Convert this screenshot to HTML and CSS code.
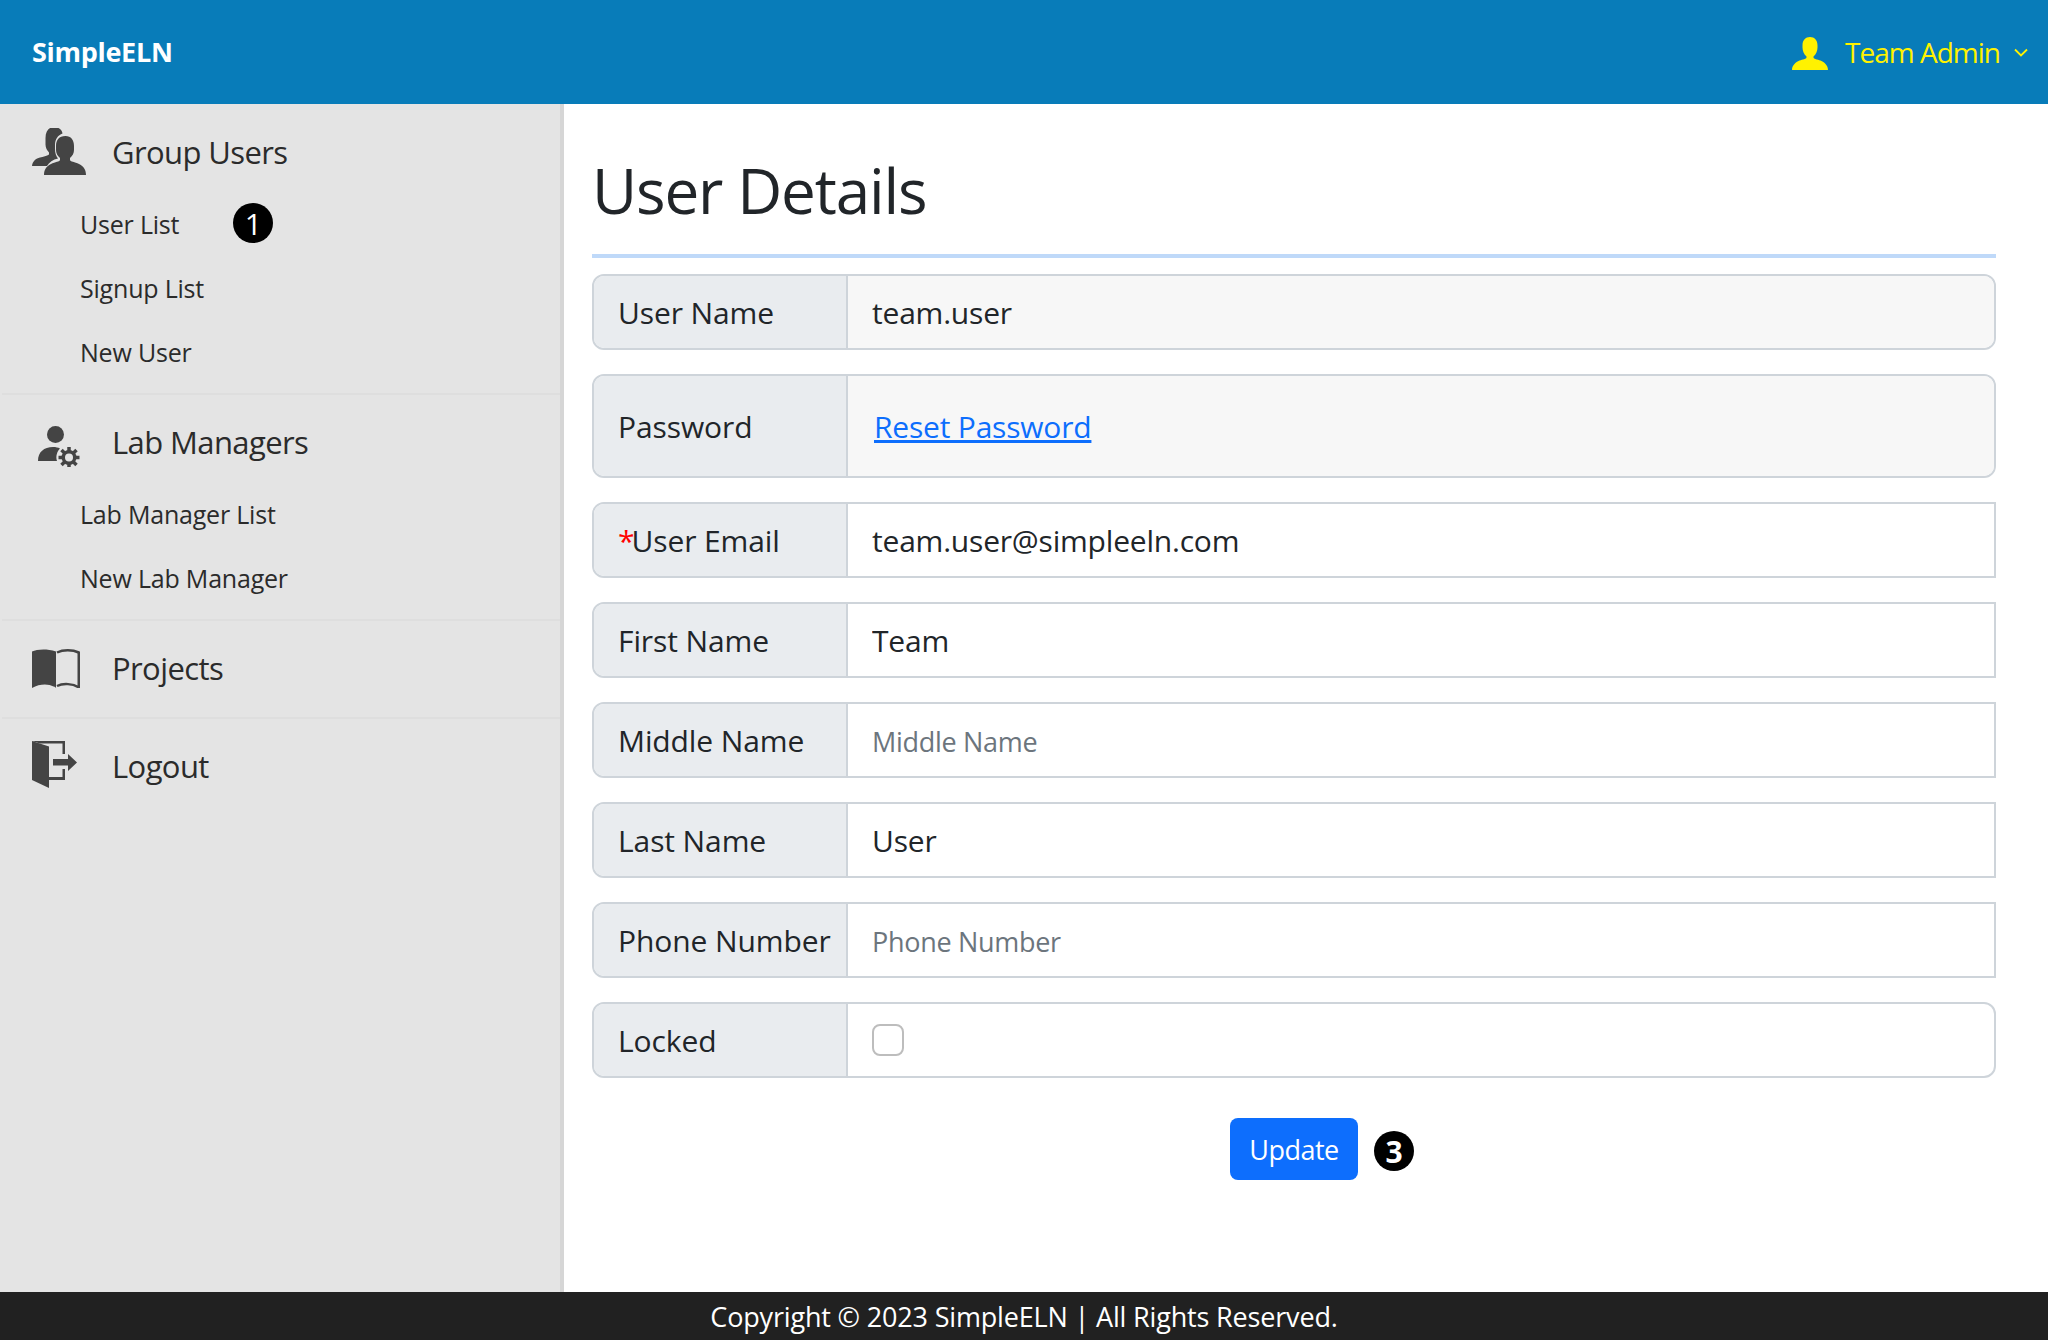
FILE: index.html
```html
<!DOCTYPE html>
<html lang="en">
<head>
    <meta charset="UTF-8">
    <title>SimpleELN - User Details</title>
    <link rel="stylesheet" href="styles.css">
</head>
<body>
    <header class="topbar">
        <a class="brand" href="#">SimpleELN</a>
        <a class="user-menu" href="#">
            <svg class="user-icon" viewBox="0 0 36 33"><path d="M18 0c4.500 0 7.500 3 7.500 8.500v2c0 3.500-1.500 7-4 9v1c0 1.500 4 2 7 3 4 1.500 7.500 5 7.500 9.500H0c0-4.500 3.500-8 7.500-9.500 3-1 7-1.500 7-3v-1c-2.500-2-4-5.500-4-9v-2C10.500 3 13.500 0 18 0z"/></svg>
            <span>Team Admin</span>
            <svg class="caret" viewBox="0 0 14 9"><path d="M1 1.500l6 6 6-6" fill="none" stroke="currentColor" stroke-width="1.800"/></svg>
        </a>
    </header>

    <div class="layout">
        <nav class="sidebar">
            <div class="nav-group">
                <a class="nav-head" href="#">
                    <span class="nav-icon">
                        <svg width="54" height="48" viewBox="0 1 54 48"><path d="M22 0c5 0 8 3 8.500 6.500C26 8 23 12.500 23 18v4c0 4 1 7 3 9.500-5 1-9 4-11 7.500H0c.5-5 4-7.500 8-8.500 3-.8 7-1.500 9-3v-2c-2-2-3.500-5-3.500-8V11C13.500 4 17 0 22 0z"/><path d="M33.500 9c5.500 0 8.500 4 8.500 10v4c0 3-1.500 6-4 8v2c0 1.500 5 2 9 4 4 2 7 5 7 11H12c0-6 3-9 7-11 4-2 9-2.500 9-4v-2c-2.500-2-4-5-4-8v-4c0-6 3-10 9.500-10z"/></svg>
                    </span>
                    Group Users
                </a>
                <a class="nav-item" href="#">User List<span class="step step-side">1</span></a>
                <a class="nav-item" href="#">Signup List</a>
                <a class="nav-item" href="#">New User</a>
            </div>
            <div class="nav-group">
                <a class="nav-head" href="#">
                    <span class="nav-icon">
                        <svg width="48" height="50" viewBox="-6 -9 48 50"><circle cx="17.500" cy="8.500" r="8.500"/><path d="M0 35c0-9 6-14 15-14 3 0 5 .5 7 1.500-3 3-4.500 8-3 12.500z"/><path d="M31 21v21M20.500 31.500h21M23.500 24l15 15M38.500 24l-15 15" stroke="#444" stroke-width="3.500"/><circle cx="31" cy="31.500" r="7.500"/><circle cx="31" cy="31.500" r="4" fill="#e4e4e4"/></svg>
                    </span>
                    Lab Managers
                </a>
                <a class="nav-item" href="#">Lab Manager List</a>
                <a class="nav-item" href="#">New Lab Manager</a>
            </div>
            <div class="nav-group">
                <a class="nav-head" href="#">
                    <span class="nav-icon">
                        <svg width="48" height="40" viewBox="0 -1 48 40"><path d="M0 2.500C5 .5 14-.5 24 2.500V39c-1-1-1.500-1.500-2.500-1.500-5-3-14-3-21.500 1.500z"/><path d="M25 3.500c6-3 15.500-3 21.750 0V38.500C41 34.500 31 34 25 37" fill="none" stroke="#444" stroke-width="2.500"/></svg>
                    </span>
                    Projects
                </a>
            </div>
            <div class="nav-group">
                <a class="nav-head" href="#">
                    <span class="nav-icon">
                        <svg width="46" height="50" viewBox="0 0 46 50"><path d="M0 0l17 5.500V47L0 39z"/><path d="M0 0h33v13h-2.500V2.500H8z"/><path d="M17 36h13.500v-8H33v11H17z"/><path d="M21 18h15v-5l9 8.500-9 8.500v-5.500H21z"/></svg>
                    </span>
                    Logout
                </a>
            </div>
        </nav>

        <main class="content">
            <h1 class="page-title">User Details</h1>
            <form class="user-form" onsubmit="return false">
                <div class="field">
                    <label class="field-label">User Name</label>
                    <input class="field-input" type="text" value="team.user" readonly>
                </div>
                <div class="field field-tall">
                    <label class="field-label">Password</label>
                    <div class="field-static"><a href="#">Reset Password</a></div>
                </div>
                <div class="field field-square">
                    <label class="field-label"><span class="required">*</span>User Email</label>
                    <input class="field-input" type="text" value="team.user@simpleeln.com">
                </div>
                <div class="field field-square">
                    <label class="field-label">First Name</label>
                    <input class="field-input" type="text" value="Team">
                </div>
                <div class="field field-square">
                    <label class="field-label">Middle Name</label>
                    <input class="field-input" type="text" placeholder="Middle Name">
                </div>
                <div class="field field-square">
                    <label class="field-label">Last Name</label>
                    <input class="field-input" type="text" value="User">
                </div>
                <div class="field field-square">
                    <label class="field-label">Phone Number</label>
                    <input class="field-input" type="text" placeholder="Phone Number">
                </div>
                <div class="field">
                    <label class="field-label">Locked</label>
                    <div class="field-check"><span class="checkbox"></span></div>
                </div>
                <div class="form-actions">
                    <div class="btn-wrap">
                        <button class="btn-update" type="submit">Update</button>
                        <span class="step step-form">3</span>
                    </div>
                </div>
            </form>
        </main>
    </div>

    <footer class="footer">Copyright © 2023 SimpleELN | All Rights Reserved.</footer>
</body>
</html>
```

FILE: styles.css
```css
* {
    box-sizing: border-box;
}

body {
    margin: 0;
    height: 100vh;
    display: flex;
    flex-direction: column;
    font-family: "Open Sans", "Liberation Sans", sans-serif;
    color: #212529;
    background-color: #fff;
    overflow: hidden;
}

a {
    text-decoration: none;
    color: inherit;
}

.topbar {
    height: 104px;
    flex: none;
    display: flex;
    align-items: center;
    justify-content: space-between;
    padding: 0 20px 0 32px;
    background-color: #087cb9;
}

.brand {
    color: #fff;
    font-size: 27px;
    font-weight: 700;
    letter-spacing: -0.3px;
    margin-top: -2px;
}

.user-menu {
    display: flex;
    align-items: center;
    color: #fff200;
    font-size: 28px;
    letter-spacing: -1px;
}

.user-icon {
    width: 36px;
    height: 33px;
    margin-top: 3px;
    margin-right: 17px;
    fill: #fff200;
}

.caret {
    width: 14px;
    height: 9px;
    margin-left: 14px;
}

.layout {
    flex: 1;
    display: flex;
    min-height: 0;
}

.sidebar {
    width: 564px;
    flex: none;
    padding-top: 1px;
    background-color: #e4e4e4;
    border-right: 4px solid #d6d6d6;
}

.nav-group {
    padding-bottom: 8px;
    border-bottom: 2px solid #dedede;
    margin-left: 2px;
}

.nav-group:last-child {
    border-bottom: none;
}

.nav-head {
    height: 88px;
    padding-top: 6px;
    display: flex;
    align-items: center;
    padding-left: 30px;
    font-size: 31px;
    letter-spacing: -0.6px;
    color: #2b2b2b;
}

.nav-icon {
    width: 80px;
    flex: none;
    display: flex;
    fill: #444;
}

.nav-item {
    height: 64px;
    display: flex;
    align-items: center;
    padding-left: 78px;
    padding-bottom: 2px;
    font-size: 25px;
    letter-spacing: -0.2px;
    color: #2b2b2b;
}

.step {
    width: 40px;
    height: 40px;
    border-radius: 50%;
    display: flex;
    align-items: center;
    justify-content: center;
    background-color: #000;
    color: #fff;
    font-size: 30px;
    letter-spacing: 0;
}

.step-side {
    margin-left: 54px;
    margin-top: -2px;
}

.step-form {
    position: absolute;
    left: calc(100% + 16px);
    top: 13px;
    font-weight: 700;
}

.content {
    flex: 1;
    min-width: 0;
    padding: 0 52px 0 28px;
}

.page-title {
    margin: 0;
    height: 154px;
    padding-top: 42px;
    font-size: 62px;
    font-weight: 400;
    line-height: 88px;
    letter-spacing: -1.15px;
    border-bottom: 4px solid #bfd9f9;
}

.user-form {
    padding-top: 16px;
}

.field {
    height: 76px;
    margin-bottom: 24px;
    display: flex;
    border: 2px solid #ced4da;
    border-radius: 12px;
    overflow: hidden;
    font-size: 30px;
    letter-spacing: -0.2px;
}

.field-tall {
    height: 104px;
}

.field-square {
    border-top-right-radius: 0;
    border-bottom-right-radius: 0;
}

.field-label {
    width: 254px;
    flex: none;
    display: flex;
    align-items: center;
    padding-left: 24px;
    letter-spacing: -0.1px;
    background-color: #e9ecef;
    border-right: 2px solid #ced4da;
    white-space: nowrap;
}

.required {
    color: #f00;
    margin-right: -3px;
}

.field-input {
    flex: 1;
    min-width: 0;
    border: none;
    outline: none;
    padding: 0 24px;
    font: inherit;
    letter-spacing: inherit;
    color: #212529;
    background-color: #fff;
}

.field-input[readonly],
.field-static {
    background-color: #f7f7f7;
}

.field-input::placeholder {
    color: #6c757d;
    font-size: 27px;
    letter-spacing: -0.3px;
    opacity: 1;
}

.field-static {
    flex: 1;
    display: flex;
    align-items: center;
    padding-left: 26px;
}

.field-static a {
    color: #0d6efd;
    text-decoration: underline;
}

.field-check {
    flex: 1;
    display: flex;
    align-items: center;
    padding-left: 24px;
}

.checkbox {
    width: 32px;
    height: 32px;
    border: 2px solid #bdbdbd;
    border-radius: 8px;
    background-color: #fff;
}

.form-actions {
    display: flex;
    justify-content: center;
    padding-top: 16px;
}

.btn-wrap {
    position: relative;
}

.btn-update {
    display: block;
    width: 128px;
    height: 62px;
    border: none;
    border-radius: 8px;
    background-color: #0d6efd;
    color: #fff;
    font-family: inherit;
    font-size: 27px;
    letter-spacing: -0.5px;
}

.footer {
    height: 48px;
    flex: none;
    display: flex;
    align-items: center;
    justify-content: center;
    background-color: #212121;
    color: #fff;
    font-size: 27px;
    letter-spacing: -0.17px;
}
```
